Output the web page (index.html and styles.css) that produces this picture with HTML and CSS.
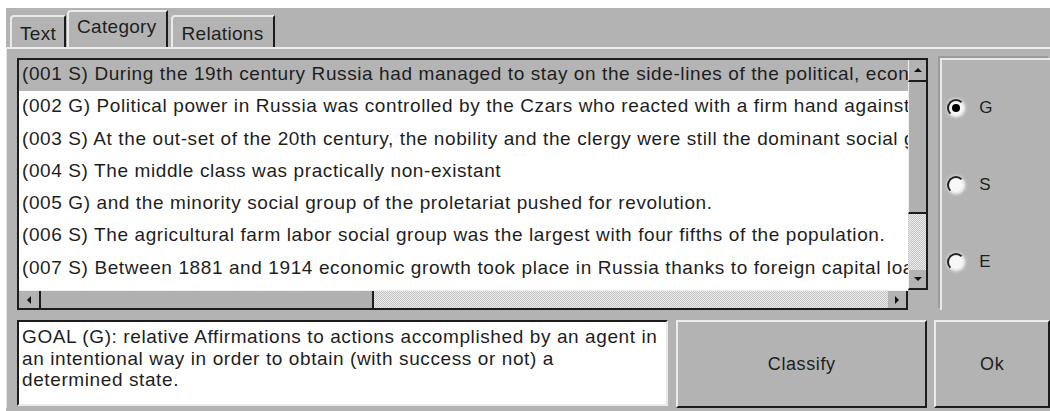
FILE: index.html
```html
<!DOCTYPE html>
<html>
<head>
<meta charset="utf-8">
<title>Category</title>
<link rel="stylesheet" href="styles.css">
</head>
<body>
<div class="frame">
  <div class="tabs">
    <div class="tab">Text</div>
    <div class="tab active">Category</div>
    <div class="tab">Relations</div>
  </div>
  <div class="panel">
    <div class="top-row">
      <div class="scrollpane">
        <div class="viewport">
          <div class="row selected">(001 S) During the 19th century Russia had managed to stay on the side-lines of the political, economic</div>
          <div class="row">(002 G) Political power in Russia was controlled by the Czars who reacted with a firm hand against</div>
          <div class="row">(003 S) At the out-set of the 20th century, the nobility and the clergy were still the dominant social groups</div>
          <div class="row">(004 S) The middle class was practically non-existant</div>
          <div class="row">(005 G) and the minority social group of the proletariat pushed for revolution.</div>
          <div class="row">(006 S) The agricultural farm labor social group was the largest with four fifths of the population.</div>
          <div class="row">(007 S) Between 1881 and 1914 economic growth took place in Russia thanks to foreign capital loans</div>
        </div>
        <div class="vscroll">
          <div class="sbtn up"><span class="arrow arrow-up"></span></div>
          <div class="vthumb"></div>
          <div class="track"></div>
          <div class="sbtn down"><span class="arrow arrow-down"></span></div>
        </div>
        <div class="hscroll">
          <div class="sbtn left"><span class="arrow arrow-left"></span></div>
          <div class="hthumb"></div>
          <div class="track"></div>
          <div class="sbtn right"><span class="arrow arrow-right"></span></div>
        </div>
        <div class="corner"></div>
      </div>
      <div class="choices">
        <label class="radio"><span class="dot checked"></span>G</label>
        <label class="radio"><span class="dot"></span>S</label>
        <label class="radio"><span class="dot"></span>E</label>
      </div>
    </div>
    <div class="bottom-row">
      <div class="description">GOAL (G): relative Affirmations to actions accomplished by an agent in<br>an intentional way in order to obtain (with success or not) a<br>determined state.</div>
      <div class="button classify">Classify</div>
      <div class="button ok">Ok</div>
    </div>
  </div>
</div>
</body>
</html>
```
FILE: styles.css
```css
html, body {
  margin: 0;
  padding: 0;
  background: #fff;
}

body {
  width: 1050px;
  height: 411px;
  overflow: hidden;
  font-family: "Liberation Sans", Arial, sans-serif;
  color: #1e1e1e;
  letter-spacing: 0.6px;
}

.frame {
  margin: 8px 0 0 6px;
  height: 403px;
  background: #b3b3b3;
  overflow: hidden;
}

/* tab strip */
.tabs {
  display: flex;
  align-items: flex-end;
  height: 39px;
  padding-left: 4px;
}

.tab {
  height: 27px;
  padding: 3px 8px 0 7px;
  display: flex;
  align-items: center;
  font-size: 19px;
  letter-spacing: 0.3px;
  border-top: 2px solid #e9e9e9;
  border-left: 2px solid #e9e9e9;
  border-right: 2px solid #1a1a1a;
  border-top-left-radius: 4px;
  margin-right: 1px;
}

.tab:first-child {
  padding-left: 8px;
}

.tab:last-child {
  padding: 3px 10px 0 9px;
  margin-left: 2px;
}

.tab.active {
  height: 29px;
  padding: 0 9px 6px 8px;
}

/* tab body */
.panel {
  border-top: 2px solid #ececec;
  border-left: 1px solid #e4e4e4;
  padding: 9px 0 0 10px;
}

.top-row {
  display: flex;
  height: 252px;
}

/* list with scrollbars */
.scrollpane {
  width: 912px;
  display: grid;
  grid-template-columns: 1fr 20px;
  grid-template-rows: 1fr 20px;
  border-top: 2px solid #1c1c1c;
  border-left: 2px solid #1c1c1c;
}

.viewport {
  background: #fff;
  overflow: hidden;
}

.row {
  height: 32.3px;
  line-height: 28px;
  padding-left: 3px;
  font-size: 19px;
  white-space: nowrap;
}

.row.selected {
  background: #b4b4b4;
  height: 31px;
  margin-bottom: 1.3px;
}

.track {
  flex: 1;
  background-color: #dcdcdc;
  background-image: repeating-conic-gradient(#c4c4c4 0 25%, #ececec 0 50%);
  background-size: 2px 2px;
}

.vscroll {
  display: flex;
  flex-direction: column;
  border-right: 2px solid #1c1c1c;
  background: #b3b3b3;
}

.sbtn {
  background: #b3b3b3;
  display: flex;
  align-items: center;
  justify-content: center;
  box-sizing: border-box;
}

.sbtn.up {
  height: 22px;
  border-left: 1px solid #efefef;
  border-bottom: 2px solid #1c1c1c;
}

.vthumb {
  height: 132px;
  background: #b0b0b0;
  border-left: 1px solid #efefef;
  border-bottom: 2px solid #1c1c1c;
  box-sizing: border-box;
}

.sbtn.down {
  height: 20px;
  border-left: 1px solid #efefef;
  border-bottom: 2px solid #1c1c1c;
}

.hscroll {
  display: flex;
  background: #b3b3b3;
  border-bottom: 2px solid #1c1c1c;
  border-top: 1px solid #efefef;
}

.sbtn.left {
  width: 22px;
  border-right: 2px solid #1c1c1c;
}

.hthumb {
  width: 333px;
  background: #b0b0b0;
  border-right: 2px solid #1c1c1c;
  box-sizing: border-box;
}

.sbtn.right {
  width: 20px;
  border-right: 2px solid #1c1c1c;
}

.corner {
  background: #b3b3b3;
  margin: 0 -1px -2px 0;
}

.arrow {
  width: 0;
  height: 0;
  border: 3px solid transparent;
}

.arrow-up {
  border-bottom: 4px solid #111;
  border-top-width: 0;
  border-left-width: 4px;
  border-right-width: 4px;
}

.arrow-down {
  border-top: 4px solid #111;
  border-bottom-width: 0;
  border-left-width: 4px;
  border-right-width: 4px;
}

.arrow-left {
  border-right: 4px solid #111;
  border-left-width: 0;
  border-top-width: 4px;
  border-bottom-width: 4px;
}

.arrow-right {
  border-left: 4px solid #111;
  border-right-width: 0;
  border-top-width: 4px;
  border-bottom-width: 4px;
}

/* category radio group */
.choices {
  margin-left: 12px;
  width: 110px;
  box-sizing: border-box;
  border-top: 2px solid #e9e9e9;
  border-left: 2px solid #e9e9e9;
  box-shadow: -2px -2px 0 #9a9a9a;
  display: flex;
  flex-direction: column;
  gap: 58px;
  padding: 38px 0 0 5px;
}

.radio {
  display: flex;
  align-items: center;
  height: 19px;
  font-size: 17px;
  gap: 14px;
}

.dot {
  width: 18px;
  height: 18px;
  border-radius: 50%;
  background: #f7f7f7;
  border: 2px solid;
  border-color: #222 #e6e6e6 #e6e6e6 #222;
  box-sizing: border-box;
  box-shadow: 0 0 3px 1px #d8d8d8;
  display: flex;
  align-items: center;
  justify-content: center;
}

.dot.checked::after {
  content: "";
  width: 8px;
  height: 8px;
  border-radius: 50%;
  background: #000;
}

/* description and buttons */
.bottom-row {
  display: flex;
  margin-top: 10px;
  height: 88px;
}

.description {
  width: 653px;
  box-sizing: border-box;
  height: 86px;
  background: #fff;
  border-top: 2px solid #1c1c1c;
  border-left: 2px solid #1c1c1c;
  border-right: 2px solid #eaeaea;
  border-bottom: 2px solid #eaeaea;
  padding: 4px 0 0 3px;
  font-size: 19px;
  line-height: 21.5px;
  white-space: nowrap;
  overflow: hidden;
}

.button {
  box-sizing: border-box;
  height: 88px;
  display: flex;
  align-items: center;
  justify-content: center;
  font-size: 18px;
  border-top: 2px solid #ececec;
  border-left: 2px solid #ececec;
  border-right: 2px solid #1c1c1c;
  border-bottom: 2px solid #1c1c1c;
}

.classify {
  margin-left: 8px;
  width: 252px;
}

.ok {
  margin-left: 7px;
  width: 116px;
}
```
